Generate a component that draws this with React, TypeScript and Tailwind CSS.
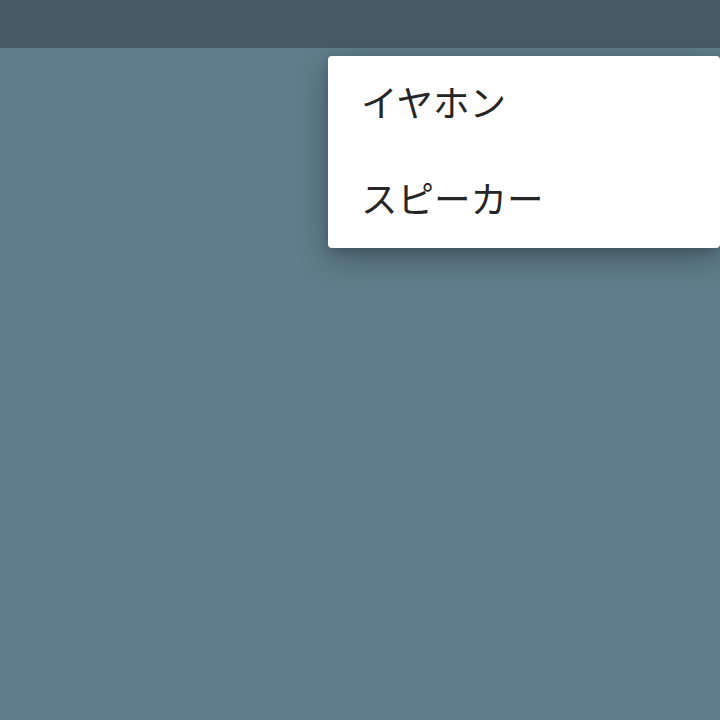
import React from "react";

const items = ["イヤホン", "スピーカー"];

export default function App() {
  return (
    <div
      className="relative w-[720px] h-[720px] bg-[#607d8b] overflow-hidden"
      style={{ fontFamily: '"Noto Sans CJK JP", "Noto Sans", sans-serif' }}
    >
      <div className="h-12 bg-[#485b65]" />

      {/* dropdown menu */}
      <ul className="absolute top-14 right-0 w-[392px] bg-white rounded shadow-[0_10px_32px_rgba(0,0,0,0.3),0_3px_10px_rgba(0,0,0,0.14)]">
        {items.map((label) => (
          <li
            key={label}
            className="h-24 flex items-center pl-[33px] pb-[3px] text-[36.5px] leading-none text-[#262626]"
          >
            {label}
          </li>
        ))}
      </ul>
    </div>
  );
}
